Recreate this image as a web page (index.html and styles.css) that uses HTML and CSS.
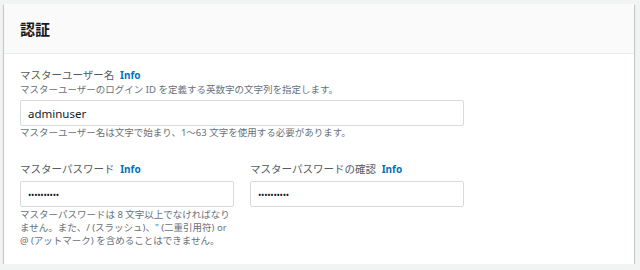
FILE: index.html
```html
<!DOCTYPE html>
<html lang="ja">
<head>
<meta charset="utf-8">
<link rel="stylesheet" href="styles.css">
</head>
<body>
<div class="page">
  <section class="card">
    <header class="card-header"><h2 class="title">認証</h2></header>
    <div class="card-body">
      <div class="field">
        <div class="label">マスターユーザー名 <a class="info">Info</a></div>
        <div class="desc">マスターユーザーのログイン ID を定義する英数字の文字列を指定します。</div>
        <input class="input" type="text" value="adminuser">
        <div class="hint">マスターユーザー名は文字で始まり、1〜63 文字を使用する必要があります。</div>
      </div>
      <div class="row">
        <div class="col">
          <div class="label">マスターパスワード <a class="info">Info</a></div>
          <input class="input pw" type="password" value="abcdefghij">
          <div class="hint hint-pw">マスターパスワードは 8 文字以上でなければなり<br>ません。また、/ (スラッシュ)、" (二重引用符) or<br>@ (アットマーク) を含めることはできません。</div>
        </div>
        <div class="col">
          <div class="label">マスターパスワードの確認 <a class="info">Info</a></div>
          <input class="input pw" type="password" value="abcdefghij">
        </div>
      </div>
    </div>
  </section>
</div>
</body>
</html>
```
FILE: styles.css
```css
html, body {
  margin: 0;
  padding: 0;
  background: #f2f3f3;
  font-family: "Noto Sans", "Noto Sans CJK JP", sans-serif;
}
.page {
  padding: 4px 6px 0 4px;
}
.card {
  background: #ffffff;
  box-shadow: 0 1px 1px 0 rgba(0, 28, 36, 0.3), 1px 1px 1px 0 rgba(0, 28, 36, 0.15), -1px 1px 1px 0 rgba(0, 28, 36, 0.15);
}
.card-header {
  background: #fafafa;
  border-bottom: 1px solid #eaeded;
  padding: 14px 16px 13px;
}
.title {
  margin: 0;
  font-size: 15px;
  line-height: 22px;
  font-weight: 700;
  color: #16191f;
}
.card-body {
  padding: 13px 16px 17px;
  width: 444px;
}
.label {
  font-size: 10.5px;
  line-height: 16px;
  color: #545b64;
}
.info {
  font-size: 10px;
  font-weight: 700;
  color: #0073bb;
  margin-left: 3px;
}
.desc {
  font-size: 9.5px;
  line-height: 13px;
  color: #687078;
}
.input {
  display: block;
  box-sizing: border-box;
  width: 100%;
  height: 26px;
  margin: 4px 0 0;
  padding: 0 7px;
  border: 1px solid #d5dbdb;
  border-radius: 2px;
  background: #ffffff;
  font-family: "Noto Sans", sans-serif;
  font-size: 11.5px;
  color: #16191f;
  outline: none;
}
.pw {
  font-size: 9px;
  letter-spacing: -0.3px;
}
.hint {
  font-size: 9.5px;
  line-height: 13px;
  color: #687078;
  margin-top: 0;
}
.hint-pw {
  margin-top: 1px;
}
.row {
  display: flex;
  gap: 16px;
  margin-top: 22px;
}
.col {
  flex: 1;
  min-width: 0;
}
```
